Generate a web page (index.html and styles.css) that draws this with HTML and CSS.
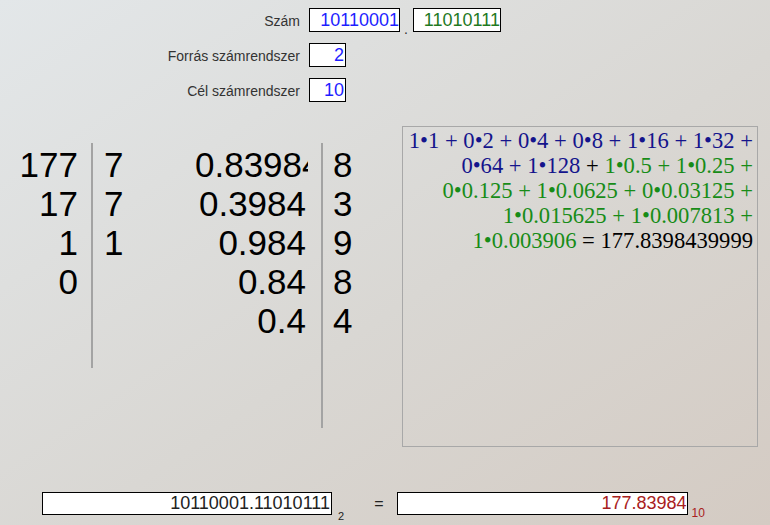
FILE: index.html
```html
<!DOCTYPE html>
<html lang="hu">
<head>
<meta charset="utf-8">
<title>Számrendszer átváltás</title>
<link rel="stylesheet" href="styles.css">
</head>
<body>
<div class="app">
  <div class="form">
    <div class="lbl">Szám</div>
    <div class="numrow">
      <div class="box box-int blue">10110001</div>
      <span class="dot">.</span>
      <div class="box box-frac green">11010111</div>
    </div>
    <div class="lbl">Forrás számrendszer</div>
    <div class="numrow"><div class="box box-sm blue">2</div></div>
    <div class="lbl">Cél számrendszer</div>
    <div class="numrow"><div class="box box-sm blue">10</div></div>
  </div>

  <div class="middle">
    <div class="division">
      <div class="col c1">
        <div>177</div><div>17</div><div>1</div><div>0</div>
      </div>
      <div class="vline l1"></div>
      <div class="col c2">
        <div>7</div><div>7</div><div>1</div>
      </div>
      <div class="col c3">
        <div>0.83984</div><div>0.3984</div><div>0.984</div><div>0.84</div><div>0.4</div>
      </div>
      <div class="vline l2"></div>
      <div class="col c4">
        <div>8</div><div>3</div><div>9</div><div>8</div><div>4</div>
      </div>
    </div>
    <div class="formula">
      <span class="f-int">1•1 + 0•2 + 0•4 + 0•8 + 1•16 + 1•32 +</span><br>
      <span class="f-int">0•64 + 1•128</span> + <span class="f-frac">1•0.5 + 1•0.25 +</span><br>
      <span class="f-frac">0•0.125 + 1•0.0625 + 0•0.03125 +</span><br>
      <span class="f-frac">1•0.015625 + 1•0.007813 +</span><br>
      <span class="f-frac">1•0.003906</span> = 177.8398439999
    </div>
  </div>

  <div class="result">
    <div class="box box-res">10110001.11010111</div>
    <span class="sub sub-src">2</span>
    <span class="eq">=</span>
    <div class="box box-res box-out">177.83984</div>
    <span class="sub sub-dst">10</span>
  </div>
</div>
</body>
</html>
```

FILE: styles.css
```css
html, body {
  margin: 0;
  padding: 0;
}
body {
  width: 770px;
  height: 525px;
  overflow: hidden;
  background: linear-gradient(to bottom right, #e3e7e9 0%, #d9d7d3 55%, #d4cbc3 100%);
  font-family: "Liberation Sans", Arial, sans-serif;
  color: #000;
}
.app {
  display: flex;
  flex-direction: column;
}

/* top form */
.form {
  display: grid;
  grid-template-columns: 300px auto;
  column-gap: 9px;
  row-gap: 11px;
  padding-top: 8px;
  align-items: baseline;
}
.lbl {
  text-align: right;
  font-size: 14px;
  color: #333;
}
.numrow {
  display: flex;
  align-items: flex-end;
}
.box {
  box-sizing: border-box;
  height: 24px;
  border: 1px solid #000;
  background: #fff;
  font-size: 18px;
  line-height: 22px;
  text-align: right;
  padding-right: 1px;
  white-space: nowrap;
  overflow: hidden;
}
.box-int { width: 91px; padding-right: 0; }
.box-frac { width: 88px; padding-right: 0; }
.box-sm { width: 37px; }
.blue { color: #1e1eff; }
.green { color: #1f7a1f; }
.dot {
  font-size: 14px;
  line-height: 14px;
  color: #333;
  margin: 0 5px -4px 4px;
}

/* middle */
.middle {
  display: flex;
  align-items: flex-start;
  margin-top: 24px;
}
.division {
  flex: none;
  width: 402px;
  display: flex;
  align-items: flex-start;
  margin-top: 17px;
  font-size: 35px;
  line-height: 39px;
  color: #000;
}
.col {
  padding-top: 2px;
  white-space: nowrap;
}
.c1 { width: 78px; text-align: right; }
.c2 { width: 91px; margin-left: 11px; }
.c3 {
  width: 111px;
  padding-right: 2px;
  text-align: right;
  overflow: hidden;
}
.c4 { margin-left: 10px; }
.vline {
  width: 2px;
  background: #a3a3a3;
  margin-left: 13px;
}
.l1 { height: 225px; }
.l2 { height: 285px; }

.formula {
  box-sizing: border-box;
  width: 356px;
  height: 321px;
  border: 1px solid #a8a8a8;
  padding: 1px 4px 0 0;
  text-align: right;
  white-space: nowrap;
  font-family: "Liberation Serif", "Times New Roman", serif;
  font-size: 22.6px;
  line-height: 25px;
  color: #000;
}
.f-int { color: #14148c; }
.f-frac { color: #178c17; }

/* bottom result row */
.result {
  display: flex;
  align-items: flex-start;
  margin-top: 45px;
  padding-left: 42px;
}
.box-res {
  width: 290px;
  height: 23px;
  line-height: 21px;
  color: #222;
}
.box-out {
  margin-left: 14px;
  width: 291px;
  color: #a82020;
}
.sub {
  font-size: 11px;
  line-height: 13px;
}
.sub-src {
  margin-left: 6px;
  margin-top: 18px;
  color: #222;
}
.sub-dst {
  font-size: 12px;
  margin-left: 3px;
  margin-top: 15px;
  color: #a82020;
}
.eq {
  margin-left: 30px;
  font-size: 16px;
  line-height: 23px;
  color: #222;
}
```
